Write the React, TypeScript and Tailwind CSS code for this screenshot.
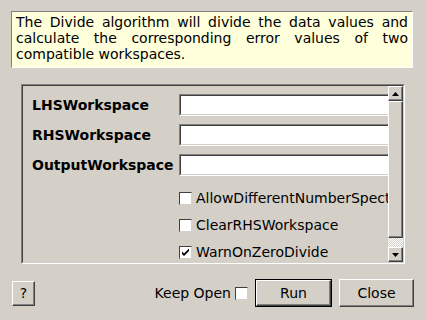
import React from 'react';

const font = { fontFamily: '"DejaVu Sans", Verdana, sans-serif' };

function CheckBox({ checked = false }: { checked?: boolean }) {
  return (
    <span className="flex h-[13px] w-[13px] shrink-0 items-center justify-center border border-t-[#404040] border-l-[#404040] border-b-[#d4d0c8] border-r-[#d4d0c8] bg-white">
      {checked && (
        <svg width="9" height="9" viewBox="0 0 9 9">
          <path d="M1 3.5 L3 5.5 L8 0.5 L8 3 L3 8 L1 6 Z" fill="#000" />
        </svg>
      )}
    </span>
  );
}

function RaisedButton({ label, className = '', isDefault = false }: { label: string; className?: string; isDefault?: boolean }) {
  return (
    <div className={`${isDefault ? 'border border-black' : ''} ${className}`}>
      <div className="flex h-full w-full items-center justify-center border border-t-white border-l-white border-b-[#404040] border-r-[#404040] text-[14px] text-black shadow-[inset_-1px_-1px_0_#808080]">
        {label}
      </div>
    </div>
  );
}

export default function App() {
  return (
    <div className="flex h-[320px] w-[426px] flex-col bg-[#d4d0c8] text-black" style={font}>
      <div className="ml-[11px] mt-[11px] h-[57px] w-[402px] border border-t-[#808080] border-l-[#808080] border-b-white border-r-white bg-[#ffffdc] px-[4px] pt-[2px] text-justify text-[14px] leading-[16px]">
        The Divide algorithm will divide the data values and calculate the corresponding error values of two compatible workspaces.
      </div>

      <div className="ml-[21px] mt-[16px] flex h-[180px] w-[384px] border border-t-[#808080] border-l-[#808080] border-b-white border-r-white">
        <div className="flex h-full w-full border border-t-[#404040] border-l-[#404040] border-b-[#d4d0c8] border-r-[#d4d0c8]">
          <div className="flex min-w-0 flex-1 flex-col overflow-hidden pl-[9px] pt-[8px]">
            <div className="flex flex-col gap-[8px]">
              {['LHSWorkspace', 'RHSWorkspace', 'OutputWorkspace'].map((name) => (
                <div key={name} className="flex h-[22px] items-center">
                  <span className="w-[147px] shrink-0 text-[14px] font-bold">{name}</span>
                  <div className="h-[22px] w-[240px] shrink-0 border border-t-[#808080] border-l-[#808080] border-b-white border-r-white">
                    <div className="h-full w-full border border-t-[#404040] border-l-[#404040] border-b-[#d4d0c8] border-r-[#d4d0c8] bg-white" />
                  </div>
                </div>
              ))}
            </div>
            <div className="mt-[12px] flex flex-col gap-[7px] pl-[147px]">
              {[
                ['AllowDifferentNumberSpectra', false],
                ['ClearRHSWorkspace', false],
                ['WarnOnZeroDivide', true],
              ].map(([name, checked]) => (
                <div key={name as string} className="flex h-[20px] items-center gap-[4px] whitespace-nowrap text-[14px]">
                  <CheckBox checked={checked as boolean} />
                  <span>{name as string}</span>
                </div>
              ))}
            </div>
          </div>

          <div className="flex w-[15px] shrink-0 flex-col">
            <div className="flex h-[15px] items-center justify-center border border-t-white border-l-white border-b-[#404040] border-r-[#404040] shadow-[inset_-1px_-1px_0_#808080]">
              <svg width="7" height="4" viewBox="0 0 7 4"><path d="M3.5 0 L7 4 L0 4 Z" fill="#000" /></svg>
            </div>
            <div className="flex-1 border border-t-white border-l-white border-b-[#404040] border-r-[#404040] shadow-[inset_-1px_-1px_0_#808080]" />
            <div className="h-[9px] bg-[repeating-conic-gradient(#d4d0c8_0%_25%,#ffffff_0%_50%)] bg-[length:2px_2px]" />
            <div className="flex h-[15px] items-center justify-center border border-t-white border-l-white border-b-[#404040] border-r-[#404040] shadow-[inset_-1px_-1px_0_#808080]">
              <svg width="7" height="4" viewBox="0 0 7 4"><path d="M0 0 L7 0 L3.5 4 Z" fill="#000" /></svg>
            </div>
          </div>
        </div>
      </div>

      <div className="mt-[15px] flex h-[28px] items-center pl-[12px] pr-[12px]">
        <RaisedButton label="?" className="h-[25px] w-[23px]" />
        <div className="ml-auto flex items-center gap-[4px] text-[14px]">
          <span>Keep Open</span>
          <CheckBox />
        </div>
        <RaisedButton label="Run" isDefault className="ml-[7px] h-[28px] w-[77px]" />
        <RaisedButton label="Close" className="ml-[7px] h-[28px] w-[75px]" />
      </div>
    </div>
  );
}
